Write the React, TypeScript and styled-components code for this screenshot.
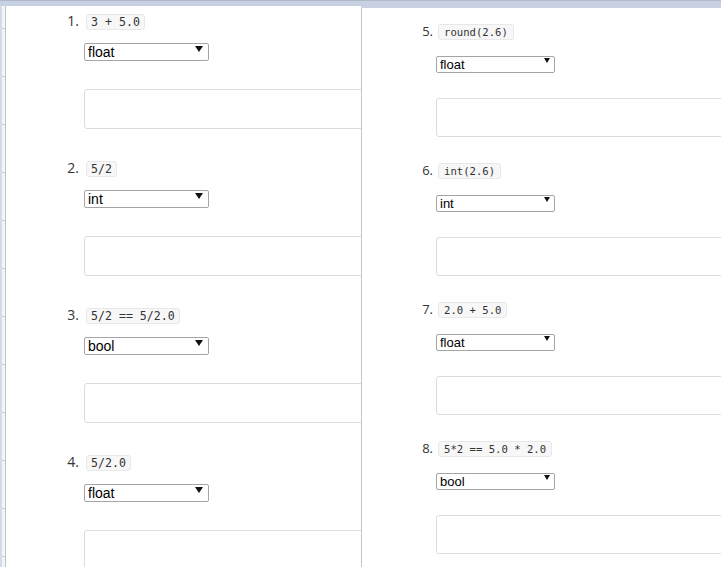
import React from "react";
import styled, { createGlobalStyle } from "styled-components";

const Global = createGlobalStyle`
  html, body { margin: 0; padding: 0; background: #fff; }
  body { font-family: "Open Sans", "Liberation Sans", sans-serif; }
`;

const Frame = styled.div`
  width: 721px;
  height: 567px;
  overflow: hidden;
  box-sizing: border-box;
  background: #c8d1e1;
  border-top: 1px solid #aeb9cb;
  padding-top: 5px;
  display: grid;
  grid-template-columns: 6px 355px 1fr;
`;

const Gutter = styled.div`
  box-sizing: border-box;
  border-right: 1px solid #c2c2c2;
  background:
    repeating-linear-gradient(
      to bottom,
      transparent 0px,
      transparent 22px,
      #c9c9c9 22px,
      #c9c9c9 23px,
      transparent 23px,
      transparent 48px
    ) 2px 0 / 3px 100% no-repeat,
    linear-gradient(to right, #d3dbe8 0, #d3dbe8 2px, #f3f5f8 2px) ;
`;

const Panel = styled.div<{ $compact?: boolean }>`
  background: #fff;
  overflow: hidden;
  box-sizing: border-box;
  margin-top: ${(p) => (p.$compact ? "2px" : "0")};
  border-left: ${(p) => (p.$compact ? "1px solid #c4c4c4" : "none")};
  padding-top: ${(p) => (p.$compact ? "15px" : "7px")};
  padding-left: 53px;
  display: flex;
  flex-direction: column;
  gap: ${(p) => (p.$compact ? "25px" : "31px")};
`;

const Item = styled.div<{ $compact?: boolean }>`
  display: grid;
  grid-template-columns: ${(p) => (p.$compact ? "18px" : "20px")} auto;
  column-gap: ${(p) => (p.$compact ? "3px" : "5px")};
  align-items: baseline;
`;

const Num = styled.span<{ $compact?: boolean }>`
  grid-column: 1;
  grid-row: 1;
  text-align: right;
  font-family: "Open Sans", "Liberation Sans", sans-serif;
  font-size: ${(p) => (p.$compact ? "13px" : "14px")};
  color: #333;
  line-height: 16px;
`;

const Code = styled.code<{ $compact?: boolean }>`
  grid-column: 2;
  grid-row: 1;
  justify-self: start;
  margin-left: 2px;
  font-family: "DejaVu Sans Mono", "Liberation Mono", monospace;
  font-size: ${(p) => (p.$compact ? "10.6px" : "11.6px")};
  line-height: 14px;
  color: #333;
  background: #f7f7f7;
  border: 1px solid #e8e8e8;
  border-radius: 3px;
  padding: 0 ${(p) => (p.$compact ? "5px" : "4px")};
  white-space: pre;
`;

const SelectWrap = styled.div<{ $compact?: boolean }>`
  grid-column: 2;
  grid-row: 2;
  position: relative;
  align-self: start;
  margin-top: ${(p) => (p.$compact ? "12px" : "10px")};
  width: ${(p) => (p.$compact ? "119px" : "125px")};
  height: ${(p) => (p.$compact ? "17px" : "18px")};
  &::after {
    content: "";
    position: absolute;
    right: ${(p) => (p.$compact ? "5px" : "6px")};
    top: 6px;
    width: 0;
    height: 0;
    border-left: ${(p) => (p.$compact ? "3.5px" : "4px")} solid transparent;
    border-right: ${(p) => (p.$compact ? "3.5px" : "4px")} solid transparent;
    border-top: ${(p) => (p.$compact ? "5px" : "6px")} solid #111;
    pointer-events: none;
  }
`;

const Select = styled.select<{ $compact?: boolean }>`
  appearance: none;
  -webkit-appearance: none;
  box-sizing: border-box;
  width: 100%;
  height: 100%;
  margin: 0;
  border: 1px solid #a5a5a5;
  border-radius: 2px;
  background: #fff;
  color: #000;
  font-family: "Liberation Sans", Arial, sans-serif;
  font-size: ${(p) => (p.$compact ? "13px" : "14px")};
  padding: 0 0 0 3px;
  line-height: 1;
  outline: none;
`;

const AnswerBox = styled.div<{ $compact?: boolean }>`
  grid-column: 2;
  grid-row: 3;
  align-self: start;
  margin-top: ${(p) => (p.$compact ? "29px" : "31px")};
  width: 420px;
  height: ${(p) => (p.$compact ? "39px" : "40px")};
  box-sizing: border-box;
  border: 1px solid #dcdcdc;
  border-radius: 3px;
  background: #fff;
`;

type Q = { n: number; code: string; type: string };

const left: Q[] = [
  { n: 1, code: "3 + 5.0", type: "float" },
  { n: 2, code: "5/2", type: "int" },
  { n: 3, code: "5/2 == 5/2.0", type: "bool" },
  { n: 4, code: "5/2.0", type: "float" },
];

const right: Q[] = [
  { n: 5, code: "round(2.6)", type: "float" },
  { n: 6, code: "int(2.6)", type: "int" },
  { n: 7, code: "2.0 + 5.0", type: "float" },
  { n: 8, code: "5*2 == 5.0 * 2.0", type: "bool" },
];

const Question: React.FC<{ q: Q; compact?: boolean }> = ({ q, compact }) => (
  <Item $compact={compact}>
    <Num $compact={compact}>{q.n}.</Num>
    <Code $compact={compact}>{q.code}</Code>
    <SelectWrap $compact={compact}>
      <Select $compact={compact} defaultValue={q.type}>
        <option value="int">int</option>
        <option value="float">float</option>
        <option value="bool">bool</option>
        <option value="str">str</option>
      </Select>
    </SelectWrap>
    <AnswerBox $compact={compact} />
  </Item>
);

export default function App() {
  return (
    <>
      <Global />
      <Frame>
        <Gutter />
        <Panel>
          {left.map((q) => (
            <Question key={q.n} q={q} />
          ))}
        </Panel>
        <Panel $compact>
          {right.map((q) => (
            <Question key={q.n} q={q} compact />
          ))}
        </Panel>
      </Frame>
    </>
  );
}
